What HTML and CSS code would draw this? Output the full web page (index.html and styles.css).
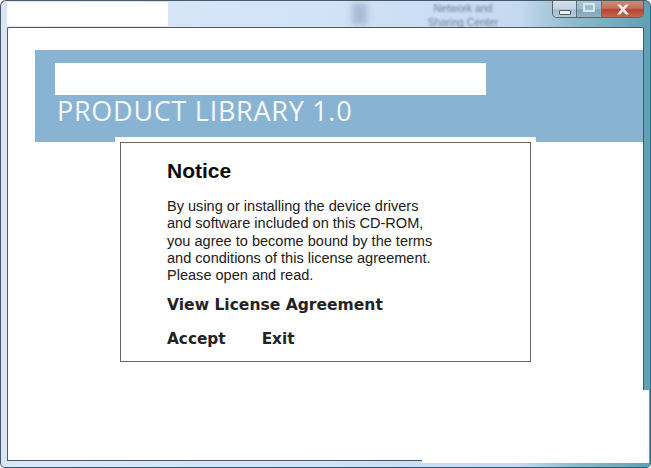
FILE: index.html
```html
<!DOCTYPE html>
<html lang="en">
<head>
<meta charset="utf-8">
<title>Product Library 1.0</title>
<link rel="stylesheet" href="styles.css">
</head>
<body>
<div class="window">
  <div class="titlebar">
    <div class="title-patch"></div>
    <div class="ghost-icon"></div>
    <div class="ghost-text">Network and<br>Sharing Center</div>
    <div class="controls">
      <div class="ctl ctl-min"><span class="min-glyph"></span></div>
      <div class="ctl ctl-max"><span class="max-glyph"></span></div>
      <div class="ctl ctl-close">
        <svg class="x-glyph" width="16" height="11" viewBox="0 0 16 11"><path d="M2 0.5h3.400L8 3.200 10.600 0.500H14L9.800 5.300 14 10.500h-3.400L8 7.400 5.400 10.500H2L6.200 5.300z" fill="#f4ebe6"/></svg>
      </div>
    </div>
  </div>
  <div class="client">
    <div class="banner">
      <div class="banner-blank"></div>
      <div class="banner-title">PRODUCT LIBRARY 1.0</div>
    </div>
    <div class="panel-mat">
      <div class="panel">
        <h1 class="notice">Notice</h1>
        <p class="copy">By using or installing the device drivers<br>and software included on this CD-ROM,<br>you agree to become bound by the terms<br>and conditions of this license agreement.<br>Please open and read.</p>
        <a class="action view" href="#">View License Agreement</a>
        <div class="choices">
          <a class="action" href="#">Accept</a>
          <a class="action" href="#">Exit</a>
        </div>
      </div>
    </div>
    <div class="corner-patch"></div>
  </div>
</div>
</body>
</html>
```
FILE: styles.css
```css
* { box-sizing: border-box; }
html, body { margin: 0; padding: 0; background: #ffffff; overflow: hidden; }
.window {
  position: relative;
  width: 651px;
  height: 468px;
  padding: 0 6px 6px 6px;
  display: flex;
  flex-direction: column;
  border: 1px solid #4a5a62;
  border-bottom-color: #1f5f7c;
  border-right-color: #2b6f88;
  border-radius: 6px 6px 5px 5px;
  background:
    linear-gradient(90deg, #d6e4f7 0, #dbe8f8 1.2%, #d2e2f8 50%, #c4d9f0 80%, #8fbccb 88%, #5fa0b4 100%);
  overflow: hidden;
}
.titlebar { position: relative; height: 26px; flex: none; overflow: hidden; }
.title-patch { position: absolute; left: 0; top: 1px; width: 161px; height: 24px; background: #ffffff; }
.ghost-icon {
  position: absolute; left: 345px; top: 2px; width: 15px; height: 22px;
  background: #8ea3bd; filter: blur(3px); opacity: .6;
}
.ghost-text {
  position: absolute; left: 411px; top: 0; width: 90px;
  font: 10.5px/14px "Liberation Sans", sans-serif; text-align: center;
  color: #5b6a80; filter: blur(1.1px); opacity: .8;
}
.controls {
  position: absolute; right: 0; top: 0; display: flex; height: 17px;
  border: 1px solid #56646c; border-top: 0; border-radius: 0 0 5px 5px; overflow: hidden;
}
.ctl { height: 16px; display: flex; align-items: center; justify-content: center; border-right: 1px solid #5c6d76; }
.ctl-min { width: 24px; background: linear-gradient(#d3e0ec 0, #c3d3e2 50%, #a8bccd 55%, #b7cbdc 100%); }
.ctl-max { width: 25px; background: linear-gradient(#a9c3d2 0, #9cb9ca 50%, #7fa4b8 55%, #8fb3c5 100%); }
.ctl-close { width: 41px; border-right: 0; background: linear-gradient(#c98d78 0, #c4705a 45%, #b5442c 55%, #c4684e 100%); }
.min-glyph { width: 12px; height: 5px; margin-top: 6px; background: #eef2f5; border: 1px solid #4a5a68; border-radius: 1px; }
.max-glyph { width: 12px; height: 9px; margin-top: -3px; border: 2px solid #dbe7ee; background: #9dbccd; }
.client {
  position: relative;
  flex: 1;
  background: #ffffff;
  border: 1px solid #4e5a63;
  border-right-color: #34616f;
  border-radius: 2px 2px 0 0;
  padding-top: 22px;
}
.banner {
  margin-left: 27px;
  height: 92px;
  padding: 13px 0 0 20px;
  background: #88b3d3;
}
.banner-blank { width: 431px; height: 32px; background: #ffffff; }
.banner-title {
  margin: 1px 0 0 2px;
  font: 400 27px/30px "Open Sans", sans-serif;
  letter-spacing: .72px;
  color: #f4f8fb;
  white-space: nowrap;
}
.panel-mat {
  margin: -5px 0 0 107px;
  width: 421px;
  padding: 5px 5px 0;
  background: #ffffff;
}
.panel {
  width: 411px;
  height: 220px;
  padding: 15px 0 0 46px;
  border: 1px solid #666666;
  background: #ffffff;
  color: #111111;
}
.notice { margin: 0; font: 700 21px/26px "Liberation Sans", Arial, sans-serif; color: #0a0a0a; }
.copy { margin: 14px 0 0; font: 400 14.55px/17.25px "Liberation Sans", Arial, sans-serif; color: #202020; white-space: nowrap; }
.action {
  display: block;
  font: 700 15.55px/20px "DejaVu Sans", Verdana, sans-serif;
  color: #232323;
  text-decoration: none;
  white-space: nowrap;
}
.view { margin-top: 11px; }
.choices { display: flex; gap: 36px; margin-top: 14px; }
.choices .action { font-size: 15.3px; }
.corner-patch {
  position: absolute; right: -6px; bottom: -3px; width: 227px; height: 73px; background: #ffffff;
}
```
